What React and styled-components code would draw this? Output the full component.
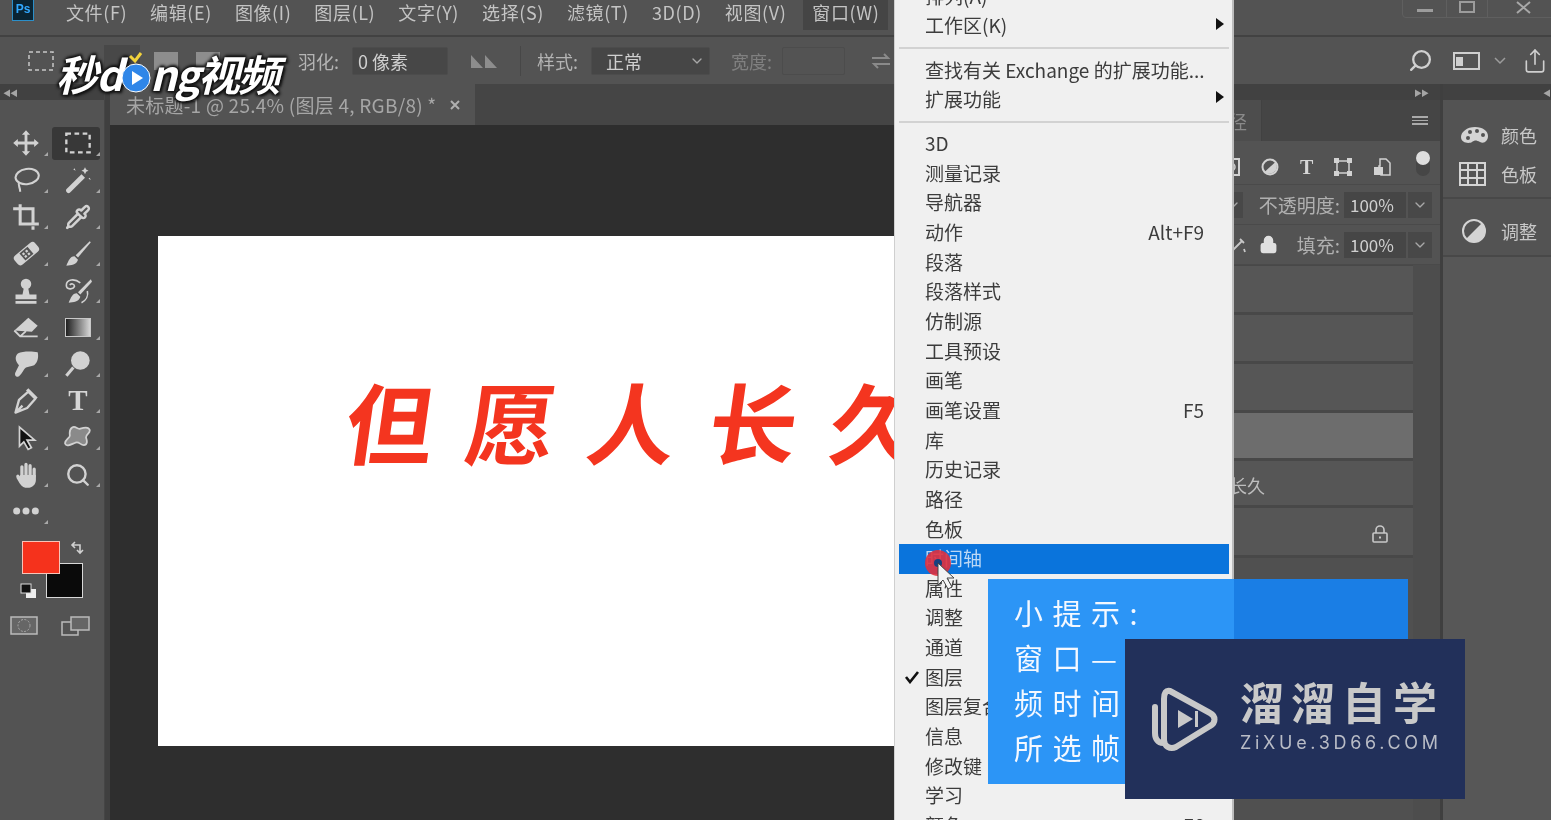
import React from 'react';
import styled, { createGlobalStyle } from 'styled-components';
import { Search, Pipette, ChevronDown, Share, Lock } from 'lucide-react';

const Global = createGlobalStyle`
    html, body { margin: 0; padding: 0; background: #535353; overflow: hidden; }
    * { box-sizing: border-box; }
`;

const CJK = `"Noto Sans CJK SC", "Open Sans", sans-serif`;

const Screen = styled.div`
    position: relative;
    width: 1551px;
    height: 820px;
    overflow: hidden;
    display: flex;
    flex-direction: column;
    background: #535353;
    font-family: ${CJK};
    color: #c4c4c4;
    filter: blur(0.55px);
`;

/* ---------- top bars ---------- */
const MenuBar = styled.div`
    height: 37px;
    flex: none;
    display: flex;
    align-items: flex-start;
    padding-left: 12px;
    background: #535353;
    border-bottom: 2px solid #424242;
`;
const PsLogo = styled.div`
    width: 22px;
    height: 21px;
    margin-right: 32px;
    background: #0a2433;
    border: 1px solid #2b8fc9;
    border-top: none;
    color: #31a8ff;
    font: 700 12px/18px "Liberation Sans", sans-serif;
    text-align: center;
`;
const MenuLabel = styled.div`
    height: 30px;
    padding: 0 ${(p) => (p.$active ? '9px' : '0')};
    margin-right: ${(p) => (p.$active ? '0' : '23px')};
    margin-left: ${(p) => (p.$active ? '-6px' : '0')};
    background: ${(p) => (p.$active ? '#454545' : 'transparent')};
    font-size: 18px;
    letter-spacing: 0.6px;
    line-height: 24px;
    white-space: nowrap;
`;
const WindowButtons = styled.div`
    position: absolute;
    top: -6px;
    left: 1402px;
    width: 155px;
    height: 24px;
    display: flex;
    border: 1px solid #5f5f5f;
    border-radius: 4px;
`;
const WindowButton = styled.div`
    width: ${(p) => p.$w}px;
    flex: none;
    display: flex;
    align-items: center;
    justify-content: ${(p) => (p.$last ? 'flex-start' : 'center')};
    padding-left: ${(p) => (p.$last ? 28 : 0)}px;
    border-left: 1px solid ${(p) => (p.$first ? 'transparent' : '#5f5f5f')};
`;
const OptionsBar = styled.div`
    height: 47px;
    flex: none;
    display: flex;
    align-items: center;
    padding-left: 28px;
    background: #535353;
`;
const OptLabel = styled.span`
    width: ${(p) => p.$w}px;
    flex: none;
    margin-left: ${(p) => p.$ml || 0}px;
    font-size: 18px;
    white-space: nowrap;
    color: ${(p) => (p.$dim ? '#808080' : '#b4b4b4')};
`;
const OptInput = styled.div`
    width: ${(p) => p.$w}px;
    flex: none;
    height: 28px;
    margin-left: ${(p) => p.$ml || 0}px;
    padding: 0 4px 0 ${(p) => p.$pl || 5}px;
    display: flex;
    align-items: center;
    justify-content: space-between;
    background: ${(p) => p.$bg || '#474747'};
    border: 1px solid #4c4c4c;
    border-radius: 2px;
    font-size: 18px;
    color: #cfcfcf;
    white-space: nowrap;
`;
const OptIcon = styled.svg`
    flex: none;
    margin-left: ${(p) => p.$ml || 0}px;
`;
const SelectedMode = styled.div`
    width: 36px;
    height: 32px;
    margin-left: 50px;
    background: #484848;
`;
const ModeStub = styled.div`
    width: 24px;
    height: 18px;
    margin-left: ${(p) => p.$ml}px;
    background: #8d8d8d;
`;
const OptSep = styled.div`
    width: 1px;
    height: 30px;
    margin-left: ${(p) => p.$ml}px;
    background: #474747;
`;
const OptSpacer = styled.div`
    flex: 1;
`;

/* ---------- main columns ---------- */
const Main = styled.div`
    flex: 1;
    min-height: 0;
    display: flex;
    background: #3f3f3f;
`;
const Strip = styled.div`
    height: 16px;
    flex: none;
    display: flex;
    align-items: center;
    justify-content: ${(p) => p.$justify || 'flex-start'};
    padding: 0 ${(p) => p.$pad || 3}px;
    background: #414141;
    color: #a5a5a5;
    font-size: 8px;
    letter-spacing: -1px;
`;
const ToolColumn = styled.div`
    width: 105px;
    flex: none;
    display: flex;
    flex-direction: column;
    background: #535353;
    border-right: 1px solid #454545;
`;
const ToolGrid = styled.div`
    display: grid;
    grid-template-columns: 52px 52px;
    grid-auto-rows: 36.8px;
    padding-top: 25px;
`;
const ToolCell = styled.div`
    position: relative;
    display: flex;
    align-items: center;
    justify-content: center;
    &::after {
        content: '';
        position: absolute;
        right: 4px;
        bottom: 6px;
        border-style: solid;
        border-width: 0 0 4px 4px;
        border-color: transparent transparent ${(p) => (p.$plain ? 'transparent' : '#a8a8a8')} transparent;
    }
`;
const ToolActive = styled(ToolCell)`
    &::before {
        content: '';
        position: absolute;
        inset: 2px 4px 2px 0;
        background: #383838;
        border-radius: 3px;
    }
    & > * { position: relative; }
`;
const GradientIcon = styled.div`
    width: 26px;
    height: 19px;
    background: linear-gradient(90deg, #1f1f1f, #d6d6d6);
    border: 1px solid #c8c8c8;
`;
const TypeGlyph = styled.span`
    font: 700 ${(p) => p.$size || 29}px/1 "Liberation Serif", serif;
    color: #d6d6d6;
`;
const SwatchWrap = styled.div`
    position: relative;
    height: 66px;
    margin-top: 11px;
`;
const Swatch = styled.div`
    position: absolute;
    left: ${(p) => p.$x}px;
    top: ${(p) => p.$y}px;
    width: ${(p) => p.$w}px;
    height: ${(p) => p.$h}px;
    background: ${(p) => p.$bg};
    border: 1px solid ${(p) => p.$line};
`;
const SwatchIcon = styled.svg`
    position: absolute;
    left: ${(p) => p.$x}px;
    top: ${(p) => p.$y}px;
`;
const ModeRow = styled.div`
    display: flex;
    margin-top: 9px;
    padding-left: 10px;
    gap: 23px;
`;

const DocColumn = styled.div`
    flex: 1;
    min-width: 0;
    margin-left: 5px;
    display: flex;
    flex-direction: column;
    background: #2e2e2e;
`;
const TabBar = styled.div`
    height: 41px;
    flex: none;
    display: flex;
    background: #454545;
`;
const DocTab = styled.div`
    width: 365px;
    display: flex;
    align-items: center;
    justify-content: space-between;
    padding: 0 15px 0 16px;
    background: #535353;
    font-size: 19px;
    letter-spacing: 0.25px;
    color: #a6a6a6;
    white-space: nowrap;
`;
const Canvas = styled.div`
    flex: 1;
    padding: 111px 0 0 48px;
`;
const Artboard = styled.div`
    width: 800px;
    height: 510px;
    background: #fff;
    padding: 125px 0 0 189px;
    overflow: hidden;
`;
const Brush = styled.div`
    display: flex;
    gap: 33px;
    font-size: 88px;
    line-height: 118px;
    font-weight: 700;
    color: #f4351f;
    white-space: nowrap;
    transform: skewX(-8deg);
`;

const LayersPanel = styled.div`
    width: 270px;
    flex: none;
    margin-left: 2px;
    display: flex;
    flex-direction: column;
    background: #535353;
`;
const PanelTabs = styled.div`
    height: 41px;
    flex: none;
    display: flex;
    align-items: stretch;
    justify-content: space-between;
    padding-right: 12px;
    background: #454545;
`;
const PanelTab = styled.div`
    width: 92px;
    display: flex;
    align-items: center;
    justify-content: flex-end;
    padding-right: 14px;
    background: #4d4d4d;
    border-right: 1px solid #414141;
    font-size: 18px;
    color: #8a8a8a;
`;
const BurgerLine = styled.div`
    width: 16px;
    height: 9px;
    align-self: center;
    border-top: 2px solid #aaa;
    border-bottom: 2px solid #aaa;
    &::after { content: ''; display: block; height: 1px; margin-top: 1.5px; background: #aaa; }
`;
const FilterRow = styled.div`
    height: 44px;
    flex: none;
    display: flex;
    align-items: center;
    padding: 8px 0 0 52px;
    gap: 21px;
    background: #535353;
    border-bottom: 1px solid #4a4a4a;
`;
const ToggleDot = styled.div`
    position: relative;
    width: 14px;
    height: 25px;
    margin: -6px 0 0 4px;
    background: #464646;
    border-radius: 7px;
    &::before {
        content: '';
        position: absolute;
        top: 0;
        left: 0;
        width: 14px;
        height: 14px;
        border-radius: 50%;
        background: #dedede;
    }
`;
const BlendRow = styled.div`
    height: 40px;
    flex: none;
    display: flex;
    align-items: center;
    padding-right: 8px;
    gap: 4px;
    font-size: 19px;
    color: #b0b0b0;
    border-bottom: 1px solid #4a4a4a;
`;
const BlendMode = styled.div`
    width: 73px;
    height: 26px;
    display: flex;
    align-items: center;
    justify-content: flex-end;
    padding-right: 2px;
    margin-right: auto;
    background: #484848;
`;
const RowIcons = styled.div`
    display: flex;
    align-items: center;
    gap: 12px;
    margin: 0 15px 0 auto;
`;
const PercentBox = styled.div`
    width: 62px;
    height: 26px;
    padding-left: 6px;
    background: #464646;
    font-size: 17px;
    line-height: 26px;
    color: #d0d0d0;
`;
const DropBox = styled.div`
    width: 24px;
    height: 26px;
    display: flex;
    align-items: center;
    justify-content: center;
    margin-left: -2px;
    background: #484848;
`;
const LayerArea = styled.div`
    flex: 1;
    display: flex;
    flex-direction: column;
    gap: 3px;
    padding-top: 1px;
    background: #484848;
    border-right: 27px solid #4d4d4d;
`;
const LayerRow = styled.div`
    height: ${(p) => p.$h || 46}px;
    flex: none;
    display: flex;
    align-items: center;
    justify-content: ${(p) => (p.$end ? 'flex-end' : 'flex-start')};
    padding: 4px 24px 0 5px;
    background: ${(p) => (p.$selected ? '#6d6d6d' : '#565656')};
    font-size: 18px;
    color: #bdbdbd;
    white-space: nowrap;
`;
const LayerRest = styled.div`
    flex: 1;
    background: #505050;
`;
const Dock = styled.div`
    width: 108px;
    flex: none;
    margin-left: 3px;
    display: flex;
    flex-direction: column;
    background: #575757;
`;
const DockGroup = styled.div`
    padding: ${(p) => p.$pad};
    display: flex;
    flex-direction: column;
    border-bottom: 2px solid #484848;
    background: #535353;
`;
const DockItem = styled.div`
    height: 39px;
    display: flex;
    align-items: center;
    gap: 12px;
    padding-left: 16px;
    font-size: 18px;
    color: #c8c8c8;
`;

/* ---------- menu ---------- */
const WindowMenu = styled.div`
    position: absolute;
    left: 894px;
    top: -18px;
    width: 340px;
    padding: 0 3px 0 4px;
    background: #f0f0f0;
    border-left: 1px solid #cfcfcf;
    border-right: 2px solid #bdbdbd;
`;
const MenuItem = styled.div`
    position: relative;
    height: 29.65px;
    display: flex;
    align-items: center;
    justify-content: space-between;
    padding: 0 25px 3px 26px;
    font-size: 19px;
    color: ${(p) => (p.$hot ? '#bcd8f5' : '#3c3c3c')};
    background: ${(p) => (p.$hot ? '#0a74dc' : 'transparent')};
    white-space: nowrap;
`;
const MenuSep = styled.div`
    height: 14.4px;
    display: flex;
    align-items: center;
    &::after { content: ''; flex: 1; height: 2px; background: #d2d2d2; }
`;
const SubArrow = styled.span`
    position: absolute;
    right: 5px;
    top: 6px;
    border-style: solid;
    border-width: 6px 0 6px 8px;
    border-color: transparent transparent transparent #111;
`;
const Check = styled.svg`
    position: absolute;
    left: 5px;
    top: 7px;
`;

/* ---------- overlays ---------- */
const Brand = styled.div`
    position: absolute;
    left: 56px;
    top: 46px;
    display: flex;
    align-items: center;
    font: italic 700 42px/54px ${CJK};
    color: #fff;
    letter-spacing: -2px;
    text-shadow: 0 0 3px #111, 2px 2px 3px #111, -2px 1px 3px #111, 1px -2px 3px #111;
    white-space: nowrap;
`;
const BrandPlay = styled.svg`
    margin: 0 -1px 0 0;
`;
const TipBox = styled.div`
    position: absolute;
    left: 988px;
    top: 579px;
    width: 420px;
    height: 205px;
    padding: 11px 0 0 26px;
    background: linear-gradient(90deg, #2c95f6 0 246px, #1a7ee5 246px);
    color: #f4f8ff;
    font-size: 29px;
    line-height: 45px;
    letter-spacing: 9.500px;
    white-space: nowrap;
`;
const Watermark = styled.div`
    position: absolute;
    left: 1125px;
    top: 639px;
    width: 340px;
    height: 160px;
    display: flex;
    align-items: center;
    gap: 22px;
    padding-left: 25px;
    background: #22305a;
`;
const WmText = styled.div`
    display: flex;
    flex-direction: column;
    padding-bottom: 10.500px;
`;
const WmTitle = styled.div`
    font-size: 44px;
    line-height: 50px;
    font-weight: 700;
    letter-spacing: 7px;
    color: #c9c9c9;
    white-space: nowrap;
`;
const WmSub = styled.div`
    margin-top: 8.500px;
    font: 400 18px/18px "Inter", sans-serif;
    letter-spacing: 3.700px;
    color: #b9bcc6;
    white-space: nowrap;
`;
const Pointer = styled.svg`
    position: absolute;
    left: 924px;
    top: 549px;
`;

/* ---------- icons ---------- */
const ic = '#d2d2d2';
const Ico = ({ children, size = 28 }) => (
    <svg width={size} height={size} viewBox="0 0 24 24" fill={ic} stroke="none">{children}</svg>
);
const icons = {
    move: <Ico><path d="M12 1l3.500 4h-2.300v5.800H19V8.500l4 3.500-4 3.500v-2.300h-5.800V19h2.300L12 23l-3.500-4h2.300v-5.800H5v2.300L1 12l4-3.500v2.300h5.800V5H8.500z" /></Ico>,
    marquee: <Ico><rect x="2" y="4" width="20" height="16" fill="none" stroke={ic} strokeWidth="2" strokeDasharray="4 3" /></Ico>,
    lasso: <Ico><ellipse cx="13" cy="9" rx="10" ry="6.500" fill="none" stroke={ic} strokeWidth="1.800" transform="rotate(-8 13 9)" /><path d="M6 14c-1 3 1 4 1 8" fill="none" stroke={ic} strokeWidth="1.800" /></Ico>,
    wand: <Ico><path d="M2 20L15 7l3 3L5 23c-2 1-4-1-3-3z" /><path d="M18 1l1 2 2 1-2 1-1 2-1-2-2-1 2-1zM9 2l1 2-2-1zM22 10l1 2-2-1z" /></Ico>,
    crop: <Ico><path d="M1 5h4M7 1v17h16M5 5h13v13M18 20v3" fill="none" stroke={ic} strokeWidth="2.600" /></Ico>,
    pipette: <Pipette size={26} color={ic} strokeWidth={2.300} />,
    heal: <Ico><g transform="rotate(-40 12 12)"><rect x="1" y="7" width="23" height="10" rx="3" /><rect x="8" y="8" width="9" height="8" fill="#535353" /><path d="M9.500 9.500h2v2h-2zM13 9.500h2v2h-2zM9.500 12.500h2v2h-2zM13 12.500h2v2h-2z" /></g></Ico>,
    brush: <Ico><path d="M22 1L10 13l2 2L23 2z" /><path d="M9 14c-4 0-5 4-7 8 4 0 9-1 10-5z" /></Ico>,
    stamp: <Ico><circle cx="12" cy="6" r="4.500" /><path d="M10 10h4l1 5h6v4H3v-4h6zM3 20.500h18V23H3z" /></Ico>,
    history: <Ico><path d="M23 2L12 13l2 2L24 4z" /><path d="M11 14c-4 0-5 4-7 8 4 0 9-1 10-5z" /><path d="M14 5C9 1 2 2 2 7c0 4 6 4 7 1 0-2-3-3-4-1M20 12c1 4-1 8-5 10" fill="none" stroke={ic} strokeWidth="1.400" /></Ico>,
    eraser: <Ico><path d="M2 15L14 4l8 7-5 5z" /><path d="M2 15l5 5h15M7 20l5-4.500" fill="none" stroke={ic} strokeWidth="1.600" /></Ico>,
    smudge: <Ico><path d="M5 3c4-2 12-2 17-1 1 4 0 9-3 11-3 1-5 1-7 2-2 1-4 7-7 8-2 0-3-2-2-4l3-6C3 10 2 6 5 3z" /></Ico>,
    dodge: <Ico><circle cx="14" cy="9" r="8" /><path d="M8 15L2 22" stroke={ic} strokeWidth="2.600" /></Ico>,
    pen: <Ico><path d="M3 22l3-11 8-7 6 6-7 8zM3 22l6-6" fill="none" stroke={ic} strokeWidth="2" strokeLinejoin="round" /><path d="M14 1l8 8-2 2-8-8z" /></Ico>,
    arrow: <Ico size={26}><path d="M6 2l14 12h-7l4 7-3 1.500-4-7-4 4z" fill="#111" stroke={ic} strokeWidth="1.600" /></Ico>,
    shape: <Ico><path d="M7 3c3-2 4 2 7 1s7-2 8 1-4 4-3 7 1 6-2 6-4-3-7-2-8 4-9 1 4-5 4-7-1-5 2-7z" fill="#8a8a8a" stroke={ic} strokeWidth="1.500" /></Ico>,
    hand: <Ico><path d="M5 13l4 5M8.500 13V5M12 12V3M15.500 12V4M19 13V7" fill="none" stroke={ic} strokeWidth="2.800" strokeLinecap="round" /><path d="M7 12h13.500v4c0 4-3 7-7 7-3 0-5-1-7-4l-3-5 3 1z" /></Ico>,
    zoom: <Search size={26} color={ic} strokeWidth={2.200} />,
    dots: <Ico><circle cx="4" cy="12" r="3" /><circle cx="12" cy="12" r="3" /><circle cx="20" cy="12" r="3" /></Ico>,
    gradient: <GradientIcon />,
    type: <TypeGlyph>T</TypeGlyph>,
};
const toolRows = [
    ['move', 'marquee'], ['lasso', 'wand'], ['crop', 'pipette'], ['heal', 'brush'], ['stamp', 'history'],
    ['eraser', 'gradient'], ['smudge', 'dodge'], ['pen', 'type'], ['arrow', 'shape'], ['hand', 'zoom'], ['dots', null],
];
const menuNames = ['文件(F)', '编辑(E)', '图像(I)', '图层(L)', '文字(Y)', '选择(S)', '滤镜(T)', '3D(D)', '视图(V)'];
const panelItems = [
    ['3D'], ['测量记录'], ['导航器'], ['动作', 'Alt+F9'], ['段落'], ['段落样式'], ['仿制源'], ['工具预设'], ['画笔'],
    ['画笔设置', 'F5'], ['库'], ['历史记录'], ['路径'], ['色板'], ['时间轴'], ['属性'], ['调整'], ['通道'], ['图层'],
    ['图层复合'], ['信息'], ['修改键'], ['学习'], ['颜色', 'F6'],
];
const SmallChevron = () => <ChevronDown size={16} color="#a8a8a8" />;

const App = () => (
    <Screen>
        <Global />
        <MenuBar>
            <PsLogo>Ps</PsLogo>
            {menuNames.map((m) => <MenuLabel key={m}>{m}</MenuLabel>)}
            <MenuLabel $active>窗口(W)</MenuLabel>
            <WindowButtons>
                <WindowButton $first $w={43}><svg width="16" height="16"><rect x="0" y="11" width="16" height="3" fill="#9c9c9c" /></svg></WindowButton>
                <WindowButton $w={41}><svg width="16" height="16"><rect x="1" y="4" width="14" height="10" fill="none" stroke="#9c9c9c" strokeWidth="2" /></svg></WindowButton>
                <WindowButton $last $w={70}><svg width="16" height="16"><path d="M1 4l13 11M14 4L1 15" stroke="#a8a8a8" strokeWidth="2" /></svg></WindowButton>
            </WindowButtons>
        </MenuBar>
        <OptionsBar>
            <OptIcon width="26" height="20"><rect x="1" y="1" width="24" height="18" fill="none" stroke="#c8c8c8" strokeWidth="1.500" strokeDasharray="4 3" /></OptIcon>
            <SelectedMode />
            <ModeStub $ml={14} />
            <ModeStub $ml={18} />
            <OptLabel $ml={78} $w={47}>羽化:</OptLabel>
            <OptInput $w={96} $ml={7}>0 像素</OptInput>
            <OptIcon $ml={22} width="28" height="16"><path d="M1 15V2l12 13zM15 15V2l12 13z" fill="#8d8d8d" /></OptIcon>
            <OptSep $ml={22} />
            <OptLabel $ml={16} $w={44}>样式:</OptLabel>
            <OptInput $w={119} $ml={10} $pl={14} $bg="#464646"><span>正常</span><SmallChevron /></OptInput>
            <OptLabel $ml={21} $w={44} $dim>宽度:</OptLabel>
            <OptInput $w={63} $ml={7} $bg="#535353" />
            <OptIcon $ml={25} width="22" height="18"><path d="M2 6h16l-4-4M20 12H4l4 4" fill="none" stroke="#8a8a8a" strokeWidth="2" /></OptIcon>
            <OptSpacer />
            <Search size={25} color="#d0d0d0" strokeWidth={2.200} style={{ transform: 'scaleX(-1)' }} />
            <OptIcon $ml={20} width="27" height="20"><rect x="1" y="2" width="25" height="16" fill="none" stroke="#cfcfcf" strokeWidth="2" /><rect x="3" y="6" width="7" height="9" fill="#cfcfcf" /></OptIcon>
            <OptIcon $ml={14} width="12" height="8"><path d="M1 1l5 5 5-5" fill="none" stroke="#9c9c9c" strokeWidth="1.500" /></OptIcon>
            <Share size={26} color="#cfcfcf" strokeWidth={1.500} style={{ marginLeft: 16, marginRight: 3 }} />
        </OptionsBar>
        <Main>
            <ToolColumn>
                <Strip>◀◀</Strip>
                <ToolGrid>
                    {toolRows.flat().map((t, i) => (
                        t === 'marquee'
                            ? <ToolActive key={i}>{icons[t]}</ToolActive>
                            : <ToolCell key={i} $plain={!t}>{t && icons[t]}</ToolCell>
                    ))}
                </ToolGrid>
                <SwatchWrap>
                    <Swatch $x={46} $y={22} $w={37} $h={35} $bg="#0a0a0a" $line="#d8d8d8" />
                    <Swatch $x={22} $y={0} $w={38} $h={33} $bg="#f5321c" $line="#f7c4b8" />
                    <SwatchIcon $x={70} $y={-1} width="16" height="16"><path d="M2 5h8v8M5 2L2 5l3 3M7 10l3 3 3-3" fill="none" stroke="#d0d0d0" strokeWidth="1.600" /></SwatchIcon>
                    <SwatchIcon $x={20} $y={42} width="17" height="16"><rect x="6" y="6" width="10" height="9" fill="#eee" /><rect x="1" y="1" width="10" height="9" fill="#111" stroke="#ddd" /></SwatchIcon>
                </SwatchWrap>
                <ModeRow>
                    <svg width="28" height="19"><rect x="1" y="1" width="26" height="17" fill="#666" stroke="#bbb" strokeWidth="1.500" /><circle cx="14" cy="9.500" r="6" fill="none" stroke="#aaa" strokeDasharray="2 1.500" /></svg>
                    <svg width="30" height="20"><rect x="1" y="6" width="16" height="13" fill="none" stroke="#bbb" strokeWidth="1.500" /><rect x="10" y="1" width="18" height="13" fill="#666" stroke="#bbb" strokeWidth="1.500" /></svg>
                </ModeRow>
            </ToolColumn>
            <DocColumn>
                <TabBar>
                    <DocTab>
                        <span>未标题-1 @ 25.4% (图层 4, RGB/8) *</span>
                        <svg width="10" height="10"><path d="M1 1l8 8M9 1L1 9" stroke="#b0b0b0" strokeWidth="2" /></svg>
                    </DocTab>
                </TabBar>
                <Canvas>
                    <Artboard>
                        <Brush><span>但</span><span>愿</span><span>人</span><span>长</span><span>久</span></Brush>
                    </Artboard>
                </Canvas>
            </DocColumn>
            <LayersPanel>
                <Strip $justify="flex-end" $pad={12}>▶▶</Strip>
                <PanelTabs><PanelTab>路径</PanelTab><BurgerLine /></PanelTabs>
                <FilterRow>
                    <svg width="18" height="18"><rect x="1" y="1" width="16" height="16" fill="none" stroke="#d2d2d2" strokeWidth="2" /><circle cx="9" cy="9" r="4" fill="none" stroke="#d2d2d2" strokeWidth="1.500" /></svg>
                    <svg width="18" height="18"><circle cx="9" cy="9" r="7.500" fill="#535353" stroke="#d2d2d2" strokeWidth="2" /><path d="M3.500 14L14.500 4A7.500 7.500 0 0 1 3.500 14z" fill="#d2d2d2" /></svg>
                    <TypeGlyph $size={20}>T</TypeGlyph>
                    <svg width="18" height="18"><rect x="3" y="3" width="12" height="12" fill="none" stroke="#d2d2d2" strokeWidth="1.500" /><path d="M0 0h5v5H0zM13 0h5v5h-5zM0 13h5v5H0zM13 13h5v5h-5z" fill="#d2d2d2" /></svg>
                    <svg width="18" height="18"><path d="M7 1h6l4 4v12H8v-6H6V8h1z" fill="none" stroke="#d2d2d2" strokeWidth="1.500" /><rect x="1" y="9" width="9" height="8" fill="#d2d2d2" /></svg>
                    <ToggleDot />
                </FilterRow>
                <BlendRow>
                    <BlendMode><SmallChevron /></BlendMode>
                    不透明度:<PercentBox>100%</PercentBox><DropBox><SmallChevron /></DropBox>
                </BlendRow>
                <BlendRow>
                    <RowIcons>
                        <svg width="18" height="18"><path d="M3 15L13 5M11 3l4 4M2 5l2 2M15 13l1 3" fill="none" stroke="#c8c8c8" strokeWidth="1.800" /></svg>
                        <Lock size={19} color="#e0e0e0" fill="#e0e0e0" />
                    </RowIcons>
                    填充:<PercentBox>100%</PercentBox><DropBox><SmallChevron /></DropBox>
                </BlendRow>
                <LayerArea>
                    <LayerRow />
                    <LayerRow />
                    <LayerRow />
                    <LayerRow $selected $h={45} />
                    <LayerRow $h={44}><span>但愿人长久</span></LayerRow>
                    <LayerRow $end $h={47}><svg width="18" height="18"><path d="M5 8V5a4 4 0 0 1 8 0v3" fill="none" stroke="#c8c8c8" strokeWidth="1.600" /><rect x="2" y="8" width="14" height="9" rx="1" fill="none" stroke="#c8c8c8" strokeWidth="1.600" /><rect x="8" y="11.500" width="2" height="2" fill="#c8c8c8" /></svg></LayerRow>
                    <LayerRest />
                </LayerArea>
            </LayersPanel>
            <Dock>
                <Strip $pad={1} $justify="flex-end">◀</Strip>
                <DockGroup $pad="15px 0 4px">
                    <DockItem>
                        <svg width="30" height="22"><path d="M2 13c0-5 6-10 14-10s13 4 13 9-4 8-8 6-5-2-8 0-11 1-11-5z" fill="#d4d4d4" /><circle cx="11" cy="8" r="2" fill="#535353" /><circle cx="18" cy="7" r="2" fill="#535353" /><circle cx="24" cy="11" r="2" fill="#535353" /><circle cx="9" cy="14" r="2" fill="#535353" /></svg>
                        颜色
                    </DockItem>
                    <DockItem>
                        <svg width="30" height="24"><path d="M1 1h25v22H1zM9 1v22M18 1v22M1 8h25M1 16h25" fill="none" stroke="#d4d4d4" strokeWidth="2" /></svg>
                        色板
                    </DockItem>
                </DockGroup>
                <DockGroup $pad="12px 0 5px">
                    <DockItem>
                        <svg width="30" height="26"><circle cx="15" cy="13" r="11" fill="#535353" stroke="#d4d4d4" strokeWidth="2" /><path d="M7 21L23 5A11 11 0 0 1 7 21z" fill="#d4d4d4" /></svg>
                        调整
                    </DockItem>
                </DockGroup>
            </Dock>
        </Main>

        <WindowMenu>
            <MenuItem>排列(A)</MenuItem>
            <MenuItem>工作区(K)<SubArrow /></MenuItem>
            <MenuSep />
            <MenuItem>查找有关 Exchange 的扩展功能...</MenuItem>
            <MenuItem>扩展功能<SubArrow /></MenuItem>
            <MenuSep />
            {panelItems.map(([label, key]) => (
                <MenuItem key={label} $hot={label === '时间轴'}>
                    <span>{label}</span>
                    {key && <span>{key}</span>}
                    {label === '图层' && <Check width="16" height="14"><path d="M2 7l4 5 8-10" fill="none" stroke="#111" strokeWidth="2.600" /></Check>}
                </MenuItem>
            ))}
        </WindowMenu>

        <TipBox>小提示:<br />窗口—<br />频时间<br />所选帧</TipBox>
        <Pointer width="34" height="44" viewBox="0 0 34 44">
            <circle cx="14" cy="14" r="13" fill="#e0303d" opacity="0.9" />
            <circle cx="14" cy="14" r="4" fill="#17407f" />
            <path d="M14 14v22l5-5 5 9 4-2-5-9h7z" fill="#f4f4f4" stroke="#444" strokeWidth="1" />
        </Pointer>
        <Watermark>
            <svg width="68" height="68" viewBox="0 0 68 68">
                <path d="M5 22v26c0 6 3 10 8 10M20 6l40 22c6 3 6 10 0 13L26 62c-6 3-12-1-12-7V14c0-6 2-9 6-8z" fill="none" stroke="#c9c9c9" strokeWidth="6" strokeLinecap="round" />
                <path d="M28 25l15 9-15 9z" fill="#c9c9c9" />
                <rect x="45" y="26" width="3" height="16" fill="#c9c9c9" />
            </svg>
            <WmText>
                <WmTitle>溜溜自学</WmTitle>
                <WmSub>ZiXUe.3D66.COM</WmSub>
            </WmText>
        </Watermark>
        <Brand>
            秒d
            <BrandPlay width="30" height="44" viewBox="0 0 30 44">
                <path d="M9 5l5 5 6-8" fill="none" stroke="#f2d23c" strokeWidth="3" />
                <circle cx="15" cy="27" r="14" fill="#2f86e8" stroke="#fff" strokeWidth="1" />
                <path d="M11 20l11 7-11 7z" fill="#fff" />
            </BrandPlay>
            ng视频
        </Brand>
    </Screen>
);

export default App;
